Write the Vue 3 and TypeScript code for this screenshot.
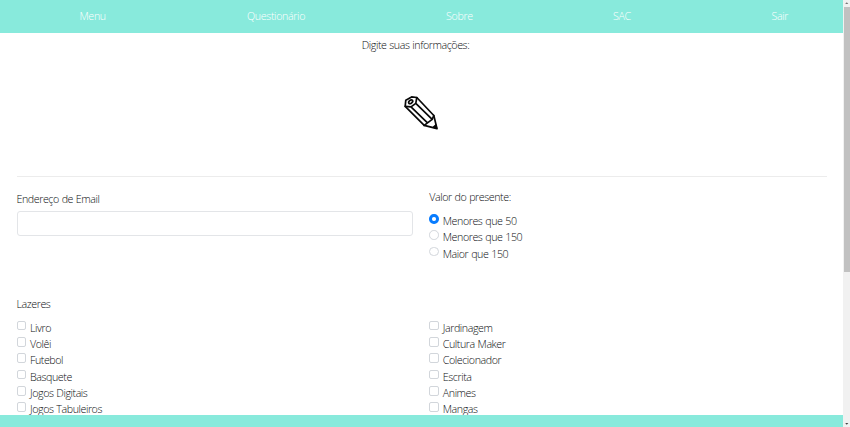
<script setup lang="ts">
import { ref } from 'vue'

const links: string[] = ['Menu', 'Questionário', 'Sobre', 'SAC', 'Sair']
const prices: string[] = ['Menores que 50', 'Menores que 150', 'Maior que 150']
const hobbies: string[][] = [
  ['Livro', 'Volêi', 'Futebol', 'Basquete', 'Jogos Digitais', 'Jogos Tabuleiros'],
  ['Jardinagem', 'Cultura Maker', 'Colecionador', 'Escrita', 'Animes', 'Mangas'],
]
const price = ref<string>(prices[0])
const chosen = ref<string[]>([])
const email = ref<string>('')
</script>

<template>
  <div class="window">
    <div class="page">
      <nav class="nav">
        <a v-for="link in links" :key="link">{{ link }}</a>
      </nav>
      <main class="content">
        <header class="intro">
          <p>Digite suas informações:</p>
          <svg class="pencil" viewBox="0 0 36 36" fill="none" stroke="#080808" stroke-width="1.7" stroke-linejoin="round" stroke-linecap="round">
            <path d="M2.2 11.4 2.8 5.2 8.6 1.9 13.8 2.5 30.8 20.5 34 33.6 21.2 30.4Z" />
            <path d="M2.2 11.4 8 11.9 12.8 8.4 13.8 2.5M8 11.9 24.5 27.9 21.2 30.4M12.8 8.4 29.2 24.3 30.8 20.5M24.5 27.9 29.2 24.3" />
            <ellipse cx="7.7" cy="6.8" rx="2.3" ry="1.5" transform="rotate(-42 7.7 6.8)" />
            <path d="M30.6 32.2 32.8 30 33.5 33.1Z" fill="#080808" />
          </svg>
        </header>
        <section class="row">
          <div class="email">
            <label for="email">Endereço de Email</label>
            <input id="email" v-model="email" class="field" type="email" />
          </div>
          <div class="price">
            <p>Valor do presente:</p>
            <label v-for="item in prices" :key="item" class="option">
              <input v-model="price" type="radio" name="price" :value="item" />
              <span>{{ item }}</span>
            </label>
          </div>
        </section>
        <section class="hobbies">
          <p>Lazeres</p>
          <div class="row">
            <div v-for="(column, i) in hobbies" :key="i">
              <label v-for="item in column" :key="item" class="option">
                <input v-model="chosen" type="checkbox" :value="item" />
                <span>{{ item }}</span>
              </label>
            </div>
          </div>
        </section>
      </main>
      <footer class="footer"></footer>
    </div>
    <aside class="scrollbar">
      <svg viewBox="0 0 8 6"><path d="M2.3 4 4 2.2 5.7 4Z" fill="#777" /></svg>
      <div class="thumb"></div>
      <svg class="down" viewBox="0 0 8 6"><path d="M2.3 2 4 3.8 5.7 2Z" fill="#444" /></svg>
    </aside>
  </div>
</template>

<style>
body {
  margin: 0;
  overflow: hidden;
}
</style>

<style scoped>
* {
  box-sizing: border-box;
}
.window {
  display: flex;
  width: 850px;
  height: 427px;
  background: #fff;
  color: #0c0e10;
  font: 300 10.7px/16px "Open Sans", "Noto Sans", sans-serif;
  letter-spacing: -0.44px;
  word-spacing: 0.5px;
}
p {
  margin: 0;
}
.page {
  display: flex;
  flex-direction: column;
  width: 842.5px;
  height: 427px;
}
.nav {
  display: grid;
  flex: none;
  grid-template-columns: 167.5px 199px 167px 158.5px auto;
  align-items: center;
  height: 33px;
  padding: 0 0 1px 79.5px;
  background: #88eadc;
  color: #fff;
  letter-spacing: -0.36px;
}
.content {
  flex: 1;
  min-height: 0;
  overflow: hidden;
  padding: 0 16px 0 16.5px;
}
.intro {
  display: flex;
  flex-direction: column;
  align-items: center;
  height: 144px;
  padding: 4px 12px 0 0;
  border-bottom: 1px solid #ececec;
}
.pencil {
  width: 36px;
  height: 36px;
  margin: 42px 0 0 10px;
}
.row {
  display: grid;
  grid-template-columns: 396px 396px;
  column-gap: 16.8px;
}
.email {
  padding-top: 14px;
}
.email label {
  display: block;
}
.field {
  display: block;
  width: 396px;
  height: 25px;
  margin-top: 4px;
  padding: 4px 8px;
  border: 1px solid #e3e5e8;
  border-radius: 3px;
  background: #fff;
  font: inherit;
  outline: none;
}
.price {
  padding-top: 12px;
}
.price p {
  margin-bottom: 8px;
}
.option {
  display: flex;
  align-items: flex-start;
  gap: 4px;
  height: 16.3px;
}
.option input {
  appearance: none;
  flex: none;
  width: 9.5px;
  height: 9.5px;
  margin: 1px 0 0;
  border: 1px solid #d2d6db;
  border-radius: 2px;
  background: #fff;
}
.option span {
  line-height: 16px;
}
.option input[type="radio"] {
  border-radius: 50%;
}
.option input[type="radio"]:checked {
  border: 3px solid #087cff;
}
.hobbies {
  padding-top: 34px;
}
.hobbies p {
  margin-bottom: 8px;
}
.footer {
  flex: none;
  height: 12px;
  background: #88eadc;
}
.scrollbar {
  display: flex;
  flex-direction: column;
  flex: 1;
  height: 427px;
  background: #f1f1f1;
}
.scrollbar svg {
  display: block;
  width: 7.5px;
  height: 6px;
}
.thumb {
  width: 6px;
  height: 265px;
  margin: 1px 0 0 1px;
  background: #c1c1c1;
}
.scrollbar .down {
  margin-top: auto;
}
</style>
